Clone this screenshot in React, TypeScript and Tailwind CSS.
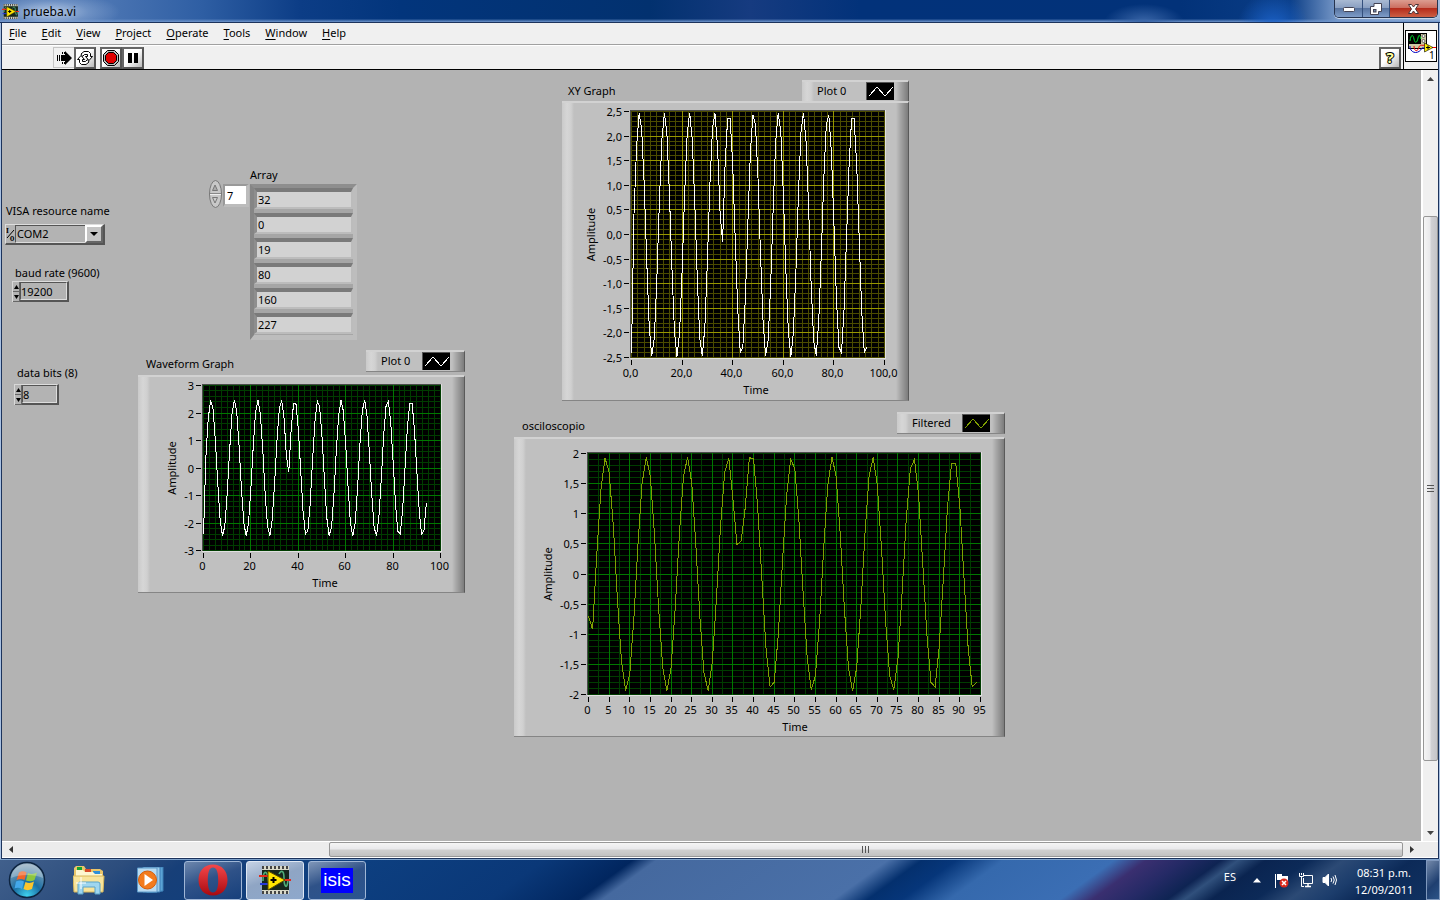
import { useState } from "react";

const MENUS = ["File", "Edit", "View", "Project", "Operate", "Tools", "Window", "Help"];
const ARRAY_VALUES = ["32", "0", "19", "80", "160", "227"];

interface Axis {
  min: number;
  max: number;
  major: number;
  minor: number;
  digits: number;
}

interface GraphProps {
  title: string;
  plotName: string;
  width: number;
  height: number;
  plot: { x: number; y: number; w: number; h: number };
  xAxis: Axis;
  yAxis: Axis;
  samples: number[];
  colors: { major: string; minor: string; line: string };
  xTitleX: number;
  yTitleX: number;
  headerClass: string;
  legendClass: string;
}

function buildWave(count: number): number[] {
  const out: number[] = [];
  for (let i = 0; i < count; i++) {
    if (i === 0) out.push(-2.4);
    else if (i === 36) out.push(-0.15);
    else if (i < 36) out.push(2.48 * Math.cos((2 * Math.PI * (i - 3.2)) / 9.87));
    else out.push(2.48 * Math.cos((2 * Math.PI * (i - 38.5)) / 9.8));
  }
  return out;
}

function buildFiltered(count: number): number[] {
  const fixed: Record<number, number> = { 0: -0.7, 1: -0.92, 35: 1.25, 36: 0.49, 37: 0.55, 39: 1.93, 40: 1.91 };
  const out: number[] = [];
  for (let i = 0; i < count; i++) {
    if (i in fixed) out.push(fixed[i]);
    else if (i < 36) out.push(1.94 * Math.cos((2 * Math.PI * (i - 4.2)) / 9.87));
    else out.push(1.94 * Math.cos((2 * Math.PI * (i - 39.5)) / 9.8));
  }
  return out;
}

function steps(axis: Axis, step: number): number[] {
  const n = Math.round((axis.max - axis.min) / step);
  return Array.from({ length: n + 1 }, (_, i) => axis.min + i * step);
}

// Decimal comma; whole numbers stay short unless the axis asks for digits
function format(value: number, digits: number): string {
  const v = Math.round(value * 10) / 10;
  const text = digits > 0 ? v.toFixed(digits) : String(v);
  return (text === "-0" ? "0" : text).replace(".", ",");
}

const BEVEL =
  "border-t-2 border-b border-r border-t-[#d2d2d2] border-b-[#858585] border-r-[#5a5a5a] bg-[linear-gradient(to_right,#cacaca_0,#d6d6d6_5px,#d0d0d0_9px,#c0c0c0_12px,#c0c0c0_calc(100%-12px),#a8a8a8_calc(100%-8px),#7c7c7c_100%)]";

function Graph(props: GraphProps) {
  const { title, plotName, width, height, plot, xAxis, yAxis, samples, colors, xTitleX, yTitleX } = props;
  const sx = (v: number) => plot.x + ((v - xAxis.min) / (xAxis.max - xAxis.min)) * (plot.w - 1);
  const sy = (v: number) => plot.y + ((yAxis.max - v) / (yAxis.max - yAxis.min)) * (plot.h - 1);
  const gx = (v: number) => Math.round(sx(v)) + 0.5;
  const gy = (v: number) => Math.round(sy(v)) + 0.5;
  const right = plot.x + plot.w;
  const bottom = plot.y + plot.h;
  const points = samples.map((v, i) => `${(sx(i) + 0.5).toFixed(1)},${(sy(v) + 0.5).toFixed(1)}`).join(" ");

  return (
    <section className="flex w-fit flex-col">
      <div className={`flex justify-between ${props.headerClass}`}>
        <h2 className="leading-4">{title}</h2>
        <div className={`flex h-[22px] items-center justify-between pr-[14px] pb-0.5 pl-[15px] ${props.legendClass} ${BEVEL}`}>
          <span className="leading-4">{plotName}</span>
          <svg width="28" height="18" className="border-t border-l border-[#555] border-r-[#e5e5e5] border-b-[#e5e5e5] bg-black">
            <polyline points="2,13 10,4 18,13 26,4" fill="none" stroke={colors.line} shapeRendering="crispEdges" />
          </svg>
        </div>
      </div>
      <div className={BEVEL}>
        <svg width={width - 1} height={height - 3} viewBox={`0 2 ${width - 1} ${height - 3}`} className="block text-[11px]">
          <g shapeRendering="crispEdges">
            <rect x={plot.x - 1} y={plot.y - 1} width={plot.w + 2} height={plot.h + 2} fill="#e0e0e0" />
            <path d={`M${plot.x - 1} ${bottom}V${plot.y - 1}H${right}V${plot.y}H${plot.x}V${bottom}Z`} fill="#4a4a4a" />
            <rect x={plot.x} y={plot.y} width={plot.w} height={plot.h} fill="#000" />
            <g stroke={colors.minor}>
              {steps(xAxis, xAxis.minor).map((v) => (
                <line key={v} x1={gx(v)} x2={gx(v)} y1={plot.y} y2={bottom} />
              ))}
              {steps(yAxis, yAxis.minor).map((v) => (
                <line key={v} x1={plot.x} x2={right} y1={gy(v)} y2={gy(v)} />
              ))}
            </g>
            <g stroke={colors.major}>
              {steps(xAxis, xAxis.major).slice(1, -1).map((v) => (
                <line key={v} x1={gx(v)} x2={gx(v)} y1={plot.y} y2={bottom} />
              ))}
              {steps(yAxis, yAxis.major).slice(1, -1).map((v) => (
                <line key={v} x1={plot.x} x2={right} y1={gy(v)} y2={gy(v)} />
              ))}
            </g>
            <g stroke="#000">
              {steps(xAxis, xAxis.major).map((v) => (
                <line key={v} x1={gx(v)} x2={gx(v)} y1={bottom + 2} y2={bottom + 7} />
              ))}
              {steps(yAxis, yAxis.major).map((v) => (
                <line key={v} x1={plot.x - 7} x2={plot.x - 2} y1={gy(v)} y2={gy(v)} />
              ))}
            </g>
            <polyline points={points} fill="none" stroke={colors.line} />
          </g>
          <g textAnchor="end">
            {steps(yAxis, yAxis.major).map((v) => (
              <text key={v} x={plot.x - 9} y={gy(v) + 4}>
                {format(v, yAxis.digits)}
              </text>
            ))}
          </g>
          <g textAnchor="middle">
            {steps(xAxis, xAxis.major).map((v) => (
              <text key={v} x={gx(v) - 1} y={bottom + 19}>
                {format(v, xAxis.digits)}
              </text>
            ))}
            <text x={xTitleX} y={bottom + 36}>
              Time
            </text>
            <text transform={`translate(${yTitleX} ${plot.y + plot.h / 2}) rotate(-90)`}>Amplitude</text>
          </g>
        </svg>
      </div>
    </section>
  );
}

interface NumericProps {
  id: string;
  label: string;
  value: string;
  inputClass: string;
  className: string;
}

function NumericControl({ id, label, value, inputClass, className }: NumericProps) {
  const [text, setText] = useState(value);
  const bump = (by: number) => setText(String(Number(text) + by));
  return (
    <div className={`flex flex-col ${className}`}>
      <label htmlFor={id} className="pl-[3px] leading-4">
        {label}
      </label>
      <div className="flex h-[21px]">
        <div className="flex w-2 flex-col border-t border-l border-[#d8d8d8] bg-[#b3b3b3]">
          <button aria-label="Increment" onClick={() => bump(1)} className="flex flex-1 items-center justify-center border-r border-b border-[#666]">
            <svg width="5" height="4"><path d="M2.5 0L5 4H0Z" /></svg>
          </button>
          <button aria-label="Decrement" onClick={() => bump(-1)} className="flex flex-1 items-center justify-center border-r border-b border-[#666]">
            <svg width="5" height="4"><path d="M2.5 4L5 0H0Z" /></svg>
          </button>
        </div>
        <div className="border-t border-r-2 border-b-2 border-[#555] border-t-[#ddd] bg-[#c0c0c0]">
          <input
            id={id}
            value={text}
            onChange={(e) => setText(e.target.value)}
            className={`block h-[18px] border border-[#555] border-r-[#ddd] border-b-[#ddd] bg-[#b3b3b3] outline-none ${inputClass}`}
          />
        </div>
      </div>
    </div>
  );
}

function LabviewChip({ size }: { size: number }) {
  return (
    <svg width={size} height={size} viewBox="0 0 32 32">
      <rect x="3" y="2" width="27" height="28" fill="#d8d8c8" />
      <path d="M3 3.5H30M3 28.5H30" stroke="#444" strokeWidth="3" strokeDasharray="2 2" />
      <rect x="3" y="6" width="27" height="20" fill="#16261c" />
      <path d="M4 17C4 6 8 6 9 14S12 27 14 20M20 10C22 6 25 6 25 14S28 27 29 16" fill="none" stroke="#4fae78" strokeWidth="1.6" />
      <path d="M0 12H10M24 16H32" stroke="#e32b1c" strokeWidth="2" />
      <path d="M1 20H10" stroke="#2438d8" strokeWidth="2" />
      <path d="M9 7L26 16L9 26Z" fill="#ffe600" stroke="#5a4c00" />
      <path d="M11.500 16H17.500M14.500 13V19" stroke="#000" strokeWidth="2" />
    </svg>
  );
}

function TitleBar() {
  return (
    <header className="flex h-[23px] shrink-0 justify-between border-b border-[#1c335c] bg-[radial-gradient(ellipse_70px_20px_at_50px_12px,#b4c8e4_0,#7f9fcdaa_55%,transparent_100%),radial-gradient(circle_at_1273px_28px,#1c62c8_0,transparent_36px),radial-gradient(ellipse_40px_18px_at_1144px_22px,#3a66a8_0,transparent_100%),linear-gradient(to_bottom,transparent_85%,#6f95cb_100%),linear-gradient(to_right,#4d73ad_0,#4a74b2_110px,#2f5fa4_200px,#0c3d86_300px,#02357c_400px,#02316f_650px,#163b80_750px,#02327a_860px,#023279_1180px,#0a3d86_1290px,#7d9dcb_1340px,#a2bbdd_100%)]">
      <div className="flex items-center gap-1 pt-px pl-[2px]">
        <LabviewChip size={17} />
        <h1 className="text-[12px] leading-4">prueba.vi</h1>
      </div>
      <div className="mr-[2px] flex h-[18px] w-[104px] overflow-hidden rounded-b-[5px] border-x border-b border-[#26344f] shadow-[0_1px_0_#c5d5ea]">
        <button aria-label="Minimize" className="flex w-7 items-center justify-center border-r border-[#34507d] bg-[linear-gradient(to_bottom,#a9bad3_0,#8aa0c2_45%,#5874a0_50%,#7e9cc8_100%)]">
          <svg width="12" height="6"><rect x="0.5" y="1.500" width="11" height="4" rx="1" fill="#fff" stroke="#445" /></svg>
        </button>
        <button aria-label="Restore" className="flex w-[27px] items-center justify-center border-r border-[#34507d] bg-[linear-gradient(to_bottom,#a9bad3_0,#8aa0c2_45%,#5874a0_50%,#7e9cc8_100%)]">
          <svg width="12" height="12" fill="none">
            <path d="M4 0.500H11.500V8.500H8.500V11.500H0.500V3.500H4Z" fill="#fff" stroke="#445" />
            <rect x="3.500" y="6.500" width="2.500" height="2.500" fill="#7089ae" stroke="#445" />
          </svg>
        </button>
        <button aria-label="Close" className="flex flex-1 items-center justify-center bg-[linear-gradient(to_bottom,#dc9d90_0,#cc6f60_45%,#b52c1b_50%,#cc5f44_100%)]">
          <svg width="13" height="12">
            <path d="M1.500 1.500H4.500L6.500 4L8.500 1.500H11.500L8.500 6L11.500 10.500H8.500L6.500 8L4.500 10.500H1.500L4.500 6Z" fill="#fff" stroke="#4b3336" />
          </svg>
        </button>
      </div>
    </header>
  );
}

function Toolbar() {
  const raised = "flex size-[22px] items-center justify-center border-2 border-[#555] border-t-[#666] border-l-[#666] bg-[linear-gradient(135deg,#fff_45%,#b8b8b8_100%)]";
  return (
    <div className="flex h-6 items-start justify-between border-t border-white pt-px pl-[51px]">
      <div className="flex">
        <button aria-label="Run" className="flex size-[21px] items-center justify-center border border-r-0 border-[#c4c4c4]">
          <svg width="16" height="16">
            <path d="M6 5H9V1L16 8L9 15V11H6Z" />
            <path d="M1.500 5V11M3.500 5V11M5.500 5V11M6.500 2V4M8.500 2V4M6.500 12V14M8.500 12V14" stroke="#000" shapeRendering="crispEdges" />
          </svg>
        </button>
        <button aria-label="Run Continuously" className={raised}>
          <svg width="18" height="18" fill="#fff" stroke="#000">
            <path d="M5 5L8 2.500H12.500L14.500 4.500V7.500H16.500L13 11.500L9.500 7.500H11.500V5.500H8.500L6.500 7.500Z" />
            <path d="M13 13L10 15.500H5.500L3.500 13.500V10.500H1.500L5 6.500L8.500 10.500H6.500V12.500H9.500L11.500 10.500Z" />
          </svg>
        </button>
        <button aria-label="Abort Execution" className={`ml-1 ${raised}`}>
          <svg width="18" height="18" stroke="#000">
            <path d="M5.500 1.500H12.500L16.500 5.500V12.500L12.500 16.500H5.500L1.500 12.500V5.500Z" fill="#bbb" />
            <path d="M6.500 3.500H11.500L14.500 6.500V11.500L11.500 14.500H6.500L3.500 11.500V6.500Z" fill="#e00000" />
          </svg>
        </button>
        <button aria-label="Pause" className={raised}>
          <svg width="12" height="10"><path d="M1 0H5V10H1ZM7 0H11V10H7Z" /></svg>
        </button>
      </div>
      <button aria-label="Show Context Help" className={`mr-[2px] ${raised}`}>
        <svg width="18" height="18" className="overflow-visible text-[15px] font-bold">
          <text x="9" y="14" textAnchor="middle" fill="#ffffa0" stroke="#000" strokeWidth="2" paintOrder="stroke">?</text>
        </svg>
      </button>
    </div>
  );
}

function ViIcon() {
  return (
    <svg width="32" height="32" className="text-[10px]">
      <rect x="0.5" y="0.5" width="31" height="31" fill="#fff" stroke="#000" />
      <rect x="3.500" y="3.500" width="18" height="15" fill="#cdc9a5" stroke="#000" />
      <rect x="4" y="4" width="12" height="10" fill="#000" />
      <path d="M5 11C6 4 8 4 9 9S12 13 13 8S15 6 16 9" fill="none" stroke="#00e030" />
      <circle cx="18.500" cy="6" r="1.500" fill="#eee" stroke="#000" strokeWidth="0.500" />
      <circle cx="18.500" cy="11" r="1.500" fill="#eee" stroke="#000" strokeWidth="0.500" />
      <path d="M5 16V18C7 24 14 24 17 18H20" fill="none" stroke="#0000c0" />
      <path d="M9 16C9 22 13 22 14 17C15 14 17 16 20 15M27 17.500H31" fill="none" stroke="#f00000" />
      <path d="M19.500 13V22L28 17.500Z" fill="#ffee00" stroke="#000" strokeWidth="0.600" />
      <path d="M21 17.500H25M23 15.500V19.500" stroke="#000" />
      <text x="24" y="29">1</text>
    </svg>
  );
}

function ArrayControl() {
  const well = "border-t-4 border-l-[3px] border-r-2 border-b-2 border-t-[#7a7a7a] border-l-[#8e8e8e] border-r-[#bcbcbc] border-b-[#bcbcbc]";
  return (
    <div className="ml-[70px] flex">
      <div className="flex w-[42px] pt-[13px]">
        <svg width="15" height="28" role="img" aria-label="Array index">
          <ellipse cx="7.500" cy="14" rx="6" ry="13.500" fill="#c8c8c8" stroke="#777" />
          <path d="M2 13.500H13" stroke="#888" />
          <path d="M2 14.500H13" stroke="#eee" />
          <path d="M7 5L9.500 10.500H4.500Z" fill="#aaa" stroke="#777" />
          <path d="M7 23L9.500 17.500H4.500Z" fill="#ccc" stroke="#777" />
        </svg>
        <input
          aria-label="Index"
          defaultValue="7"
          className="mt-1 h-[23px] w-[26px] border-2 border-r-[3px] border-b-[3px] border-[#bcbcbc] border-t-[#999] border-l-[#999] bg-white pl-[2px] outline-none"
        />
      </div>
      <div className="flex flex-col">
        <h2 className="leading-4">Array</h2>
        <div className="mt-px flex w-[107px] flex-col gap-1 border-4 border-b-[5px] border-[#bdbdbd] border-t-[#8e8e8e] border-l-[#858585] bg-[#a6a6a6] pb-px">
          {ARRAY_VALUES.map((v, i) => (
            <input key={i} aria-label={`Array ${i}`} defaultValue={v} className={`h-[21px] w-full bg-[#d2d2d2] pl-px outline-none ${well}`} />
          ))}
        </div>
      </div>
    </div>
  );
}

function FrontPanel() {
  return (
    <main className="flex min-w-0 flex-1 overflow-hidden bg-[#b3b3b3]">
      <div className="flex w-[136px] shrink-0 flex-col pt-[133px]">
        <div className="flex flex-col gap-[5px] pl-[3px]">
          <label htmlFor="visa" className="pl-px leading-4">VISA resource name</label>
          <div className="flex h-[21px] w-[100px] items-center border-t border-r-2 border-b-2 border-l border-[#555] border-t-[#ddd] border-l-[#ddd] bg-[#b3b3b3]">
            <svg width="9" height="16" className="font-serif text-[8px] font-bold">
              <text x="0" y="7">I</text>
              <text x="4" y="15">0</text>
              <path d="M1 12L8 4" stroke="#000" />
            </svg>
            <div className="relative flex flex-1">
              <select id="visa" className="h-[18px] w-full appearance-none border border-[#555] border-r-[#ddd] border-b-[#ddd] bg-[#b3b3b3] pl-px outline-none">
                <option>COM2</option>
              </select>
              <span className="pointer-events-none absolute top-0 right-0 flex h-[18px] w-[18px] items-center justify-center border-2 border-[#666] border-t-white border-l-white bg-[#c4c4c4]">
                <svg width="8" height="4"><path d="M0 0H8L4 4Z" /></svg>
              </span>
            </div>
          </div>
        </div>
        <div className="mt-5 pl-[10px]">
          <NumericControl id="baud" label="baud rate (9600)" value="19200" inputClass="w-[47px]" className="gap-0" />
        </div>
        <div className="mt-[63px] pl-3">
          <NumericControl id="bits" label="data bits (8)" value="8" inputClass="w-[35px]" className="gap-[3px]" />
        </div>
      </div>

      <div className="flex w-[327px] shrink-0 flex-col gap-[10px] pt-[97px]">
        <ArrayControl />
        <Graph
          title="Waveform Graph"
          plotName="Plot 0"
          width={327}
          height={218}
          plot={{ x: 65, y: 10, w: 238, h: 166 }}
          xAxis={{ min: 0, max: 100, major: 20, minor: 2.5, digits: 0 }}
          yAxis={{ min: -3, max: 3, major: 1, minor: 0.2, digits: 0 }}
          samples={buildWave(95)}
          colors={{ major: "#007800", minor: "#003c00", line: "#ffffff" }}
          xTitleX={187}
          yTitleX={38}
          headerClass="mb-[3px] items-end pl-2"
          legendClass="w-[99px]"
        />
      </div>

      <div className="flex flex-col gap-[11px] pt-[10px] pl-[49px]">
        <div className="pl-12">
          <Graph
            title="XY Graph"
            plotName="Plot 0"
            width={347}
            height={300}
            plot={{ x: 69, y: 10, w: 254, h: 247 }}
            xAxis={{ min: 0, max: 100, major: 20, minor: 2.5, digits: 1 }}
            yAxis={{ min: -2.5, max: 2.5, major: 0.5, minor: 0.1, digits: 1 }}
            samples={buildWave(94)}
            colors={{ major: "#969600", minor: "#4b4b00", line: "#ffffff" }}
            xTitleX={194}
            yTitleX={33}
            headerClass="-mb-px items-center pl-1.5"
            legendClass="w-[107px]"
          />
        </div>
        <Graph
          title="osciloscopio"
          plotName="Filtered"
          width={491}
          height={300}
          plot={{ x: 74, y: 16, w: 393, h: 242 }}
          xAxis={{ min: 0, max: 95, major: 5, minor: 2.5, digits: 0 }}
          yAxis={{ min: -2, max: 2, major: 0.5, minor: 0.1, digits: 0 }}
          samples={buildFiltered(95)}
          colors={{ major: "#007800", minor: "#003c00", line: "#80a000" }}
          xTitleX={281}
          yTitleX={38}
          headerClass="mb-[3px] items-end pl-2"
          legendClass="w-[108px]"
        />
      </div>
    </main>
  );
}

function VerticalScrollbar() {
  return (
    <div className="flex w-[17px] shrink-0 flex-col border-l-2 border-white bg-[#f0f0f0]">
      <button aria-label="Scroll up" className="flex h-[17px] items-center justify-center">
        <svg width="7" height="4"><path d="M3.500 0L7 4H0Z" fill="#444" /></svg>
      </button>
      <div className="grow-[129] basis-0" />
      <div className="flex grow-[543] basis-0 flex-col items-center justify-center gap-px rounded-xs border border-[#979797] bg-[linear-gradient(to_right,#f5f5f5_0,#e9e9eb_45%,#d0d0d4_55%,#c4c4c8_100%)]">
        <svg width="7" height="8"><path d="M0 0.500H7M0 3.500H7M0 6.500H7" stroke="#555" /></svg>
      </div>
      <div className="grow-[63] basis-0" />
      <button aria-label="Scroll down" className="flex h-[17px] items-center justify-center">
        <svg width="7" height="4"><path d="M3.500 4L7 0H0Z" fill="#444" /></svg>
      </button>
    </div>
  );
}

function HorizontalScrollbar() {
  return (
    <div className="flex h-[17px] shrink-0 border-t border-b border-white bg-[#ececec] pr-[17px]">
      <button aria-label="Scroll left" className="flex w-[17px] items-center justify-center">
        <svg width="4" height="7"><path d="M0 3.500L4 0V7Z" fill="#333" /></svg>
      </button>
      <div className="grow-[310] basis-0" />
      <div className="flex grow-[1074] basis-0 items-center justify-center rounded-xs border border-[#979797] bg-[linear-gradient(to_bottom,#f5f5f5_0,#e9e9eb_45%,#cfcfcf_55%,#c2c2c2_100%)]">
        <svg width="8" height="7"><path d="M0.500 0V7M3.500 0V7M6.500 0V7" stroke="#555" /></svg>
      </div>
      <button aria-label="Scroll right" className="flex w-[18px] items-center justify-center">
        <svg width="4" height="7"><path d="M4 3.500L0 0V7Z" fill="#333" /></svg>
      </button>
    </div>
  );
}

function Taskbar() {
  const task = "flex h-[39px] w-[58px] items-center justify-center rounded-[3px] border border-[#9fb6d6]";
  return (
    <footer className="flex h-[41px] shrink-0 items-center justify-between border-t border-[#7fa3cc] bg-[linear-gradient(144deg,#41608c_0,#2c4d7d_76px,#173f78_110px,#0d3f80_217px,#0a3878_320px,#01265f_372px,#45699f_386px,#4a70a8_522px,#04306e_542px,#06367a_562px,#3569ad_590px,#3b6eb4_655px,#3a2f70_674px,#252a66_696px,#0e2453_718px,#30507c_728px,#0a2450_744px,#0c2a58_770px,#2c4a75_790px,#1c3d6c_810px,#0c2a58_830px,#123362_100%)]">
      <div className="flex items-center">
        <button aria-label="Start" className="ml-[7px]">
          <svg width="40" height="38" viewBox="0 0 40 38">
            <defs>
              <radialGradient id="orb" cx="0.5" cy="0.95" r="0.9">
                <stop offset="0" stopColor="#3fd3f0" />
                <stop offset="0.45" stopColor="#1b6ea3" />
                <stop offset="1" stopColor="#8fa9bd" />
              </radialGradient>
            </defs>
            <circle cx="20" cy="19" r="17.500" fill="url(#orb)" stroke="#0d2440" strokeWidth="1.500" />
            <path d="M12 11.500C15 9.500 17.500 10 19.500 11.500L17.500 19C15 17.500 12.500 17.500 9.500 19Z" fill="#f0662a" />
            <path d="M21 12C24 13.500 27 13 30 11.500L27.500 19C25 20.500 22 20.500 19 19.500Z" fill="#8cc63f" />
            <path d="M9 20.500C12 19 14.500 19 17 20.500L15 28C12.500 26.500 10 26.500 7.500 27.500Z" fill="#43a8ea" />
            <path d="M18.500 21C21.500 22.500 24.500 22 27 20.500L25 28C22 29.500 19 29.500 16.500 28Z" fill="#fdc52c" />
            <path d="M4 17C5 7 13 3 20 3S35 7 36 17C28 13 12 13 4 17Z" fill="#fff" opacity="0.28" />
          </svg>
        </button>
        <button aria-label="Windows Explorer" className="ml-[26px]">
          <svg width="32" height="30" viewBox="0 0 32 30">
            <path d="M3 1H11L13 4H27L30 6V27H1V3Z" fill="#e9c56a" />
            <path d="M4 2H9V5H4Z" fill="#18a52e" />
            <path d="M12 4H18V7H12Z" fill="#d94b2a" />
            <path d="M20 6H27V9H20Z" fill="#2f8fd8" />
            <path d="M3 5H10L12 7H20L22 9H29V12H3Z" fill="#fdf6d0" />
            <path d="M0 11H31L30 27H1Z" fill="#f8e49c" stroke="#d8b85c" />
            <path d="M5 29V19Q5 17 7 17H25Q27 17 27 19V29H22V22H10V29Z" fill="#9fd6ef" stroke="#5ba3c8" />
            <path d="M8 12V24M3 18H13" stroke="#fff" />
          </svg>
        </button>
        <button aria-label="Windows Media Player" className="ml-8">
          <svg width="27" height="26" viewBox="0 0 27 26">
            <path d="M10 0H26V24L10 26Z" fill="#5ba3d6" stroke="#3c7fb5" />
            <path d="M6 0H23V25H6Z" fill="#9ccbea" stroke="#3c7fb5" />
            <path d="M0.500 1H20V25H0.500Z" fill="#b9dbf1" stroke="#5c99c8" />
            <circle cx="10.500" cy="13" r="9" fill="#f37b1d" stroke="#d55c08" />
            <path d="M7.500 7L16 13L7.500 19Z" fill="#fff" />
          </svg>
        </button>
        <div className="ml-5 flex gap-1">
          <button aria-label="Opera" className={`${task} bg-[linear-gradient(160deg,#6d87ad_0,#2f5288_45%,#17407c_100%)]`}>
            <svg width="30" height="32" viewBox="0 0 30 32">
              <defs>
                <linearGradient id="opera" x1="0" y1="0" x2="0" y2="1">
                  <stop offset="0" stopColor="#f5474a" />
                  <stop offset="1" stopColor="#a80a10" />
                </linearGradient>
              </defs>
              <path fillRule="evenodd" d="M15 0.500C24 0.500 29.500 7 29.500 16S24 31.500 15 31.500S0.500 25 0.500 16S6 0.500 15 0.500ZM15 3.500C11 3.500 9.800 9 9.800 16S11 28.500 15 28.500S20.200 23 20.200 16S19 3.500 15 3.500Z" fill="url(#opera)" />
            </svg>
          </button>
          <button aria-label="LabVIEW" className={`${task} border-[#dfe8f4] bg-[linear-gradient(160deg,#c5d2e4_0,#8fa5c4_45%,#8ea8cc_100%)]`}>
            <LabviewChip size={32} />
          </button>
          <button className={`${task} bg-[linear-gradient(160deg,#7f96b8_0,#2f5288_45%,#2a5590_100%)]`}>
            <span className="flex h-[25px] w-8 items-center justify-center bg-[#0000ff] font-['Liberation_Sans'] text-[19px] leading-6 text-white">isis</span>
          </button>
        </div>
      </div>
      <div className="flex h-full items-center text-white">
        <span className="mb-1.5 text-[11px]">ES</span>
        <button aria-label="Show hidden icons" className="ml-[17px]">
          <svg width="8" height="5"><path d="M4 0L8 4.500H0Z" fill="#fff" /></svg>
        </button>
        <svg width="16" height="17" className="ml-[13px]" role="img" aria-label="Action Center">
          <path d="M1.500 2V16" stroke="#fff" />
          <path d="M3 2H8V4H14V10H8V8H3Z" fill="#fff" />
          <circle cx="10" cy="11" r="4.500" fill="#d8281c" />
          <path d="M8 9L12 13M12 9L8 13" stroke="#fff" strokeWidth="1.500" />
        </svg>
        <svg width="16" height="16" className="ml-2" role="img" aria-label="Network" fill="none" stroke="#fff">
          <path d="M1.500 1V4.500H5.500V1M3.500 1V3M3.500 5V14.500H6" />
          <path d="M6 3.500H14.500V11.500H5.500V6" />
          <path d="M10 12V14M7 14.500H13" strokeWidth="1.500" />
        </svg>
        <svg width="16" height="16" className="ml-2" role="img" aria-label="Volume" fill="none" stroke="#fff">
          <path d="M1 5.500H3L6.500 2V14L3 10.500H1Z" fill="#fff" />
          <path d="M9 6Q10.500 8 9 10M11 4.500Q13.500 8 11 11.500M13 3Q16 8 13 13" />
        </svg>
        <div className="ml-4 flex w-[60px] flex-col items-center gap-px pt-0.5 text-[11px] leading-4">
          <time>08:31 p.m.</time>
          <time>12/09/2011</time>
        </div>
        <button aria-label="Show desktop" className="ml-3 h-full w-[14px] border border-[#7f98bd] bg-[linear-gradient(135deg,#7389aa_0,#1f3f70_60%,#2d5488_100%)]" />
      </div>
    </footer>
  );
}

export default function App() {
  return (
    <div className="flex h-screen flex-col overflow-hidden bg-[#a9c1e2] font-['Noto_Sans',sans-serif] text-[11px] text-black">
      <TitleBar />
      <div className="mr-px ml-px flex min-h-0 flex-1 flex-col border-x border-b border-[#1c335c] bg-white">
        <div className="flex h-[47px] shrink-0 border-b border-black bg-[#f0f0f0]">
          <div className="flex flex-1 flex-col">
            <nav className="flex h-[22px] items-center gap-[15px] border-b border-[#a0a0a0] pb-0.5 pl-[7px]">
              {MENUS.map((m) => (
                <button key={m} className="leading-4">
                  <span className="underline underline-offset-2">{m[0]}</span>
                  {m.slice(1)}
                </button>
              ))}
            </nav>
            <Toolbar />
          </div>
          <div className="flex w-[35px] items-center justify-center border-l border-black">
            <ViIcon />
          </div>
        </div>
        <div className="flex min-h-0 flex-1">
          <FrontPanel />
          <VerticalScrollbar />
        </div>
        <HorizontalScrollbar />
      </div>
      <Taskbar />
    </div>
  );
}
